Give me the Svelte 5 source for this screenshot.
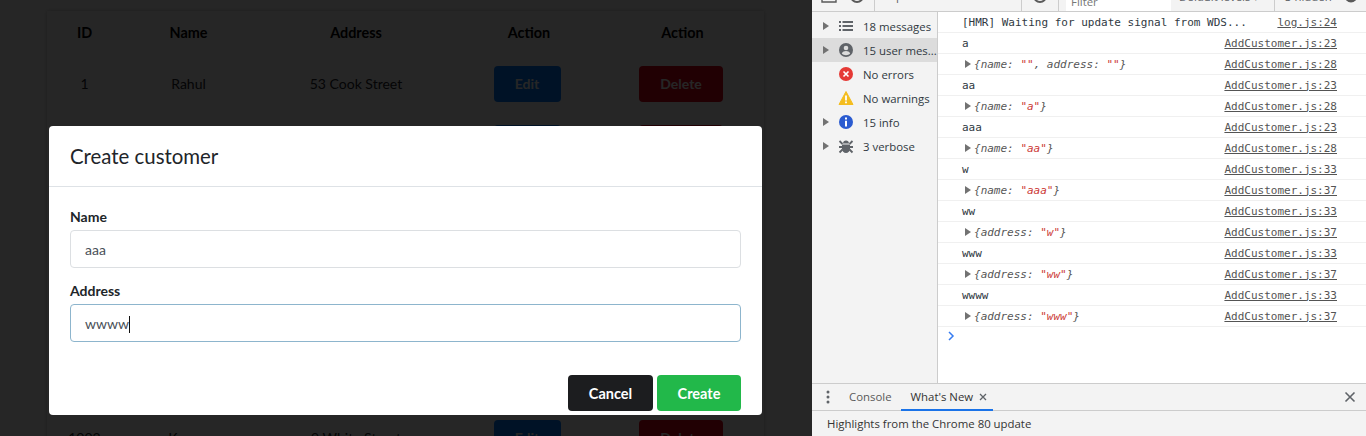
<script>
  const people = [
    { id: 1, name: "Rahul", address: "53 Cook Street" },
    { id: 2, name: "Amit", address: "12 Park Avenue" },
    { id: 3, name: "Sara", address: "7 Hill Road" },
    { id: 4, name: "Priya", address: "21 Lake View" },
    { id: 5, name: "John", address: "88 Green Lane" },
    { id: 6, name: "Neha", address: "4 River Road" },
    { id: 1002, name: "Kumar", address: "9 White Street" }
  ];

  const logs = [
    { text: "[HMR] Waiting for update signal from WDS...", src: "log.js:24" },
    { text: "a", src: "AddCustomer.js:23" },
    { obj: [["name", ""], ["address", ""]], src: "AddCustomer.js:28" },
    { text: "aa", src: "AddCustomer.js:23" },
    { obj: [["name", "a"]], src: "AddCustomer.js:28" },
    { text: "aaa", src: "AddCustomer.js:23" },
    { obj: [["name", "aa"]], src: "AddCustomer.js:28" },
    { text: "w", src: "AddCustomer.js:33" },
    { obj: [["name", "aaa"]], src: "AddCustomer.js:37" },
    { text: "ww", src: "AddCustomer.js:33" },
    { obj: [["address", "w"]], src: "AddCustomer.js:37" },
    { text: "www", src: "AddCustomer.js:33" },
    { obj: [["address", "ww"]], src: "AddCustomer.js:37" },
    { text: "wwww", src: "AddCustomer.js:33" },
    { obj: [["address", "www"]], src: "AddCustomer.js:37" }
  ];

  const filters = [
    { icon: "list", label: "18 messages", arrow: true },
    { icon: "user", label: "15 user mes...", arrow: true, selected: true },
    { icon: "error", label: "No errors" },
    { icon: "warn", label: "No warnings" },
    { icon: "info", label: "15 info", arrow: true },
    { icon: "bug", label: "3 verbose", arrow: true }
  ];
</script>

<div class="shell">
  <section class="page">
    <table class="customers">
      <colgroup>
        <col style="width: 75px" />
        <col style="width: 133px" />
        <col style="width: 202px" />
        <col style="width: 144px" />
        <col style="width: 163px" />
      </colgroup>
      <thead>
        <tr>
          <th>ID</th>
          <th>Name</th>
          <th>Address</th>
          <th>Action</th>
          <th>Action</th>
        </tr>
      </thead>
      <tbody>
        {#each people as p}
          <tr>
            <td>{p.id}</td>
            <td>{p.name}</td>
            <td>{p.address}</td>
            <td><button class="btn edit">Edit</button></td>
            <td><button class="btn del">Delete</button></td>
          </tr>
        {/each}
      </tbody>
    </table>

    <div class="backdrop"></div>

    <div class="modal">
      <h2 class="modal-title">Create customer</h2>
      <div class="modal-body">
        <div class="field">
          <span class="field-label">Name</span>
          <div class="input">aaa</div>
        </div>
        <div class="field">
          <span class="field-label">Address</span>
          <div class="input focus">wwww<i class="caret"></i></div>
        </div>
      </div>
      <div class="modal-foot">
        <button class="btn cancel">Cancel</button>
        <button class="btn create">Create</button>
      </div>
    </div>
  </section>

  <section class="devtools">
    <div class="toolbar">
      <div class="toolbar-row">
        <svg class="tb-dock" width="16" height="16" viewBox="0 0 16 16"><path d="M1 2h14v12H1z M10 2v5h5" fill="none" stroke="#5a5a5a" stroke-width="1.4" /></svg>
        <svg class="tb-ban" width="14" height="16" viewBox="0 0 14 16"><circle cx="7" cy="8" r="6" fill="none" stroke="#5a5a5a" stroke-width="2" /><path d="M3 4l8 8" stroke="#5a5a5a" stroke-width="2" /></svg>
        <span class="tb-sep sep-a"></span>
        <span class="tb-top">top</span>
        <span class="tb-sep sep-b"></span>
        <svg class="tb-eye" width="14" height="16" viewBox="0 0 14 16"><circle cx="7" cy="8" r="6" fill="none" stroke="#5a5a5a" stroke-width="2" /></svg>
        <span class="tb-sep sep-c"></span>
        <span class="tb-filter">Filter</span>
        <span class="tb-levels">Default levels ▾</span>
        <span class="tb-sep sep-d"></span>
        <span class="tb-hidden">3 hidden</span>
        <svg class="tb-gear" width="16" height="16" viewBox="0 0 16 16"><circle cx="8" cy="8" r="5" fill="none" stroke="#5a5a5a" stroke-width="3" /></svg>
      </div>
    </div>

    <div class="console">
      <aside class="sidebar">
        {#each filters as f}
          <div class="filter" class:selected={f.selected}>
            <span class="arrow-slot">{#if f.arrow}<i class="tri"></i>{/if}</span>
            <svg class="f-icon" width="16" height="16" viewBox="0 0 16 16">
              {#if f.icon === "list"}
                <path d="M1 3h2v2H1zM1 7h2v2H1zM1 11h2v2H1zM4.500 3H15v2H4.500zM4.500 7H15v2H4.500zM4.500 11H15v2H4.500z" fill="#5f6368" />
              {:else if f.icon === "user"}
                <circle cx="8" cy="8" r="7" fill="#5f6368" />
                <circle cx="8" cy="6" r="2.300" fill="#dcdcdc" />
                <path d="M3.800 11.500c.8-1.700 2.500-2.400 4.200-2.400s3.400.7 4.200 2.400c-1 1.100-2.500 1.700-4.200 1.700s-3.200-.6-4.200-1.700z" fill="#dcdcdc" />
              {:else if f.icon === "error"}
                <circle cx="8" cy="8" r="7" fill="#e53935" />
                <path d="M5.500 5.500l5 5M10.500 5.500l-5 5" stroke="#fff" stroke-width="1.600" />
              {:else if f.icon === "warn"}
                <path d="M8 1.500L15 14.500H1z" fill="#f4bd1f" stroke="#f4bd1f" stroke-linejoin="round" />
                <path d="M7.100 5.500h1.800v5H7.100zM7.100 11.500h1.800v1.800H7.100z" fill="#fff" />
              {:else if f.icon === "info"}
                <circle cx="8" cy="8" r="7" fill="#2a5bd0" />
                <path d="M7 3.500h2v2H7zM7 6.800h2v5.700H7z" fill="#fff" />
              {:else}
                <path d="M5 5.500c0-1.700 1.300-3 3-3s3 1.300 3 3zM4 6.500h8V11c0 2.200-1.800 4-4 4s-4-1.800-4-4z" fill="#5f6368" />
                <path d="M1.500 3l3 3M14.500 3l-3 3M1 9h3.500M15 9h-3.500M1.500 14.500l3-3M14.500 14.500l-3-3" stroke="#5f6368" stroke-width="1.800" />
              {/if}
            </svg>
            <span class="f-label">{f.label}</span>
          </div>
        {/each}
      </aside>

      <div class="log">
        {#each logs as row}
          <div class="log-row">
            {#if row.obj}
              <span class="log-obj"><i class="tri small"></i>{"{"}{#each row.obj as kv, i}{i ? ", " : ""}{kv[0]}: <b class="str">"{kv[1]}"</b>{/each}{"}"}</span>
            {:else}
              <span class="log-text">{row.text}</span>
            {/if}
            <span class="log-src">{row.src}</span>
          </div>
        {/each}
        <svg class="prompt" width="8" height="10" viewBox="0 0 8 10"><path d="M2 1l4 4-4 4" fill="none" stroke="#367cf1" stroke-width="1.500" /></svg>
      </div>
    </div>

    <div class="drawer-tabs">
      <svg class="kebab" width="4" height="14" viewBox="0 0 4 14"><circle cx="2" cy="2" r="1.500" /><circle cx="2" cy="7" r="1.500" /><circle cx="2" cy="12" r="1.500" /></svg>
      <span class="tab">Console</span>
      <span class="tab active">What's New<svg class="tab-x" width="8" height="8" viewBox="0 0 8 8"><path d="M1 1l6 6M7 1l-6 6" stroke="#5f6368" stroke-width="1.300" /></svg></span>
      <svg class="drawer-x" width="12" height="12" viewBox="0 0 12 12"><path d="M1.500 1.500l9 9M10.500 1.500l-9 9" stroke="#5f6368" stroke-width="1.600" /></svg>
    </div>
    <div class="drawer-body">Highlights from the Chrome 80 update</div>
  </section>
</div>

<style>
  :global(body) {
    margin: 0;
    background: #fff;
    overflow: hidden;
  }

  .shell {
    display: grid;
    grid-template-columns: 812px 554px;
    height: 436px;
    overflow: hidden;
  }

  .page {
    position: relative;
    overflow: hidden;
    padding: 11px 0 0 47px;
    font-family: Lato, sans-serif;
    font-size: 14px;
    color: #212529;
    background: #fff;
  }

  .customers {
    width: 717px;
    table-layout: fixed;
    border-collapse: collapse;
    text-align: center;
    box-shadow: 0 0 4px rgba(0, 0, 0, 0.25);
  }

  .customers th {
    height: 43px;
    padding: 0;
    font-size: 14.4px;
    font-weight: 700;
    color: #000;
  }

  .customers td {
    height: 59px;
    padding: 0;
  }

  .btn {
    height: 36px;
    padding: 0 20px;
    border: none;
    border-radius: 4px;
    font-family: inherit;
    font-size: 14.5px;
    font-weight: 700;
    color: #fff;
  }

  .edit {
    width: 67px;
    margin-right: 4px;
    font-size: 14px;
    background: #007bff;
  }

  .del {
    width: 84px;
    margin-right: 3px;
    font-size: 14px;
    background: #dc0018;
  }

  .backdrop {
    position: absolute;
    inset: 0;
    background: rgba(0, 0, 0, 0.85);
  }

  .modal {
    position: absolute;
    left: 49px;
    top: 126px;
    width: 713px;
    height: 289px;
    background: #fff;
    border-radius: 4px;
    display: flex;
    flex-direction: column;
  }

  .modal-title {
    margin: 0;
    padding: 0 21px;
    height: 60px;
    line-height: 61px;
    border-bottom: 1px solid #dee2e6;
    font-size: 20.4px;
    font-weight: 400;
    color: #212529;
  }

  .modal-body {
    padding: 21px 21px 0;
    display: flex;
    flex-direction: column;
    gap: 14px;
  }

  .field {
    display: flex;
    flex-direction: column;
    gap: 4px;
  }

  .field-label {
    font-size: 14px;
    font-weight: 700;
    line-height: 18px;
    color: #212529;
  }

  .input {
    height: 38px;
    box-sizing: border-box;
    padding-left: 14px;
    border: 1px solid #dcdfe2;
    border-radius: 4px;
    font-size: 14px;
    line-height: 38px;
    color: #495057;
  }

  .input.focus {
    border-color: #8db5cd;
  }

  .caret {
    display: inline-block;
    width: 1px;
    height: 17px;
    background: #111;
    vertical-align: -4px;
  }

  .modal-foot {
    margin-top: auto;
    padding: 0 21px 4px;
    display: flex;
    justify-content: flex-end;
    gap: 4px;
  }

  .cancel {
    width: 85px;
    background: #1c1d1f;
  }

  .create {
    width: 84px;
    background: #22b84a;
  }

  .devtools {
    display: flex;
    flex-direction: column;
    height: 436px;
    background: #fff;
    font-family: "Open Sans", sans-serif;
    font-size: 11.4px;
    color: #303942;
  }

  .toolbar {
    height: 11px;
    flex: none;
    overflow: hidden;
    background: #f3f3f3;
    border-bottom: 1px solid #ccc;
    display: flex;
    align-items: flex-end;
  }

  .toolbar-row {
    position: relative;
    flex: none;
    width: 100%;
    height: 26px;
    color: #5f6368;
  }

  .toolbar-row > * {
    position: absolute;
  }

  .tb-dock { left: 9px; top: 3px; }
  .tb-ban { left: 38px; top: 3px; }
  .tb-eye { left: 221px; top: 3px; }
  .tb-gear { left: 531px; top: 3px; }
  .tb-sep { top: 4px; width: 1px; height: 22px; background: #ccc; }
  .sep-a { left: 62px; }
  .sep-b { left: 209px; }
  .sep-c { left: 246px; }
  .sep-d { left: 462px; }
  .tb-top { left: 73px; top: 3px; }
  .tb-filter {
    left: 254px;
    top: 0;
    width: 105px;
    height: 26px;
    line-height: 33px;
    padding-left: 5px;
    box-sizing: border-box;
    background: #fff;
    color: #777;
  }
  .tb-levels { left: 367px; top: 4px; }
  .tb-hidden { left: 473px; top: 4px; }

  .console {
    flex: 1;
    min-height: 0;
    display: flex;
    border-bottom: 1px solid #ccc;
  }

  .sidebar {
    flex: none;
    width: 126px;
    box-sizing: border-box;
    padding-top: 2px;
    background: #f3f3f3;
    border-right: 1px solid #ccc;
  }

  .filter {
    height: 24px;
    display: flex;
    align-items: center;
  }

  .filter.selected {
    background: #dcdcdc;
  }

  .arrow-slot {
    flex: none;
    width: 26px;
    padding-left: 11px;
    box-sizing: border-box;
    display: flex;
  }

  .tri {
    width: 0;
    height: 0;
    border-style: solid;
    border-width: 4.500px 0 4.500px 6px;
    border-color: transparent transparent transparent #727272;
  }

  .tri.small {
    display: inline-block;
    margin-right: 3px;
    border-width: 4px 0 4px 6px;
    vertical-align: -0.5px;
  }

  .f-icon {
    flex: none;
  }

  .f-label {
    margin-left: 9px;
    white-space: nowrap;
    overflow: hidden;
  }

  .log {
    flex: 1;
    min-width: 0;
    font-family: "DejaVu Sans Mono", monospace;
    font-size: 11px;
  }

  .log-row {
    height: 21px;
    box-sizing: border-box;
    padding: 0 29px 0 24px;
    display: flex;
    justify-content: space-between;
    align-items: center;
    border-bottom: 1px solid #f0f0f0;
    white-space: nowrap;
  }

  .log-obj {
    margin-left: 3px;
    font-style: italic;
    color: #565656;
  }

  .str {
    font-weight: 400;
    color: #cc3a36;
  }

  .log-src {
    color: #545454;
    text-decoration: underline;
  }

  .prompt {
    display: block;
    margin: 4px 0 0 9px;
  }

  .drawer-tabs {
    flex: none;
    height: 27px;
    box-sizing: border-box;
    position: relative;
    display: flex;
    align-items: stretch;
    background: #f3f3f3;
    border-bottom: 1px solid #ccc;
  }

  .kebab {
    flex: none;
    align-self: center;
    margin: 0 14px 0 14px;
    fill: #5f6368;
  }

  .tab {
    padding: 0 9px 0 5px;
    line-height: 26px;
    color: #5a5a5a;
  }

  .tab.active {
    padding: 0 0 0 10px;
    width: 92px;
    box-sizing: border-box;
    border-bottom: 2px solid #1a73e8;
    height: 27px;
    display: flex;
    align-items: center;
    gap: 6px;
    color: #333;
    white-space: nowrap;
  }

  .tab-x {
    flex: none;
  }

  .drawer-x {
    position: absolute;
    right: 10px;
    top: 7px;
  }

  .drawer-body {
    flex: none;
    height: 25px;
    line-height: 25px;
    padding-left: 15px;
    background: #f3f3f3;
    color: #333;
  }
</style>
